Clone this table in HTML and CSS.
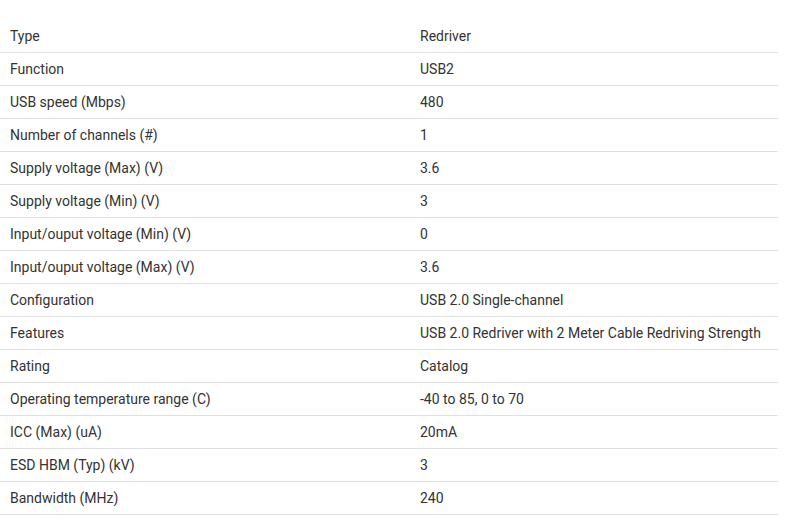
FILE: index.html
```html
<!DOCTYPE html>
<html>
<head>
<meta charset="utf-8">
<link rel="stylesheet" href="styles.css">
</head>
<body>
<table class="params">
<colgroup><col class="col-name"><col class="col-value"></colgroup>
<tbody>
<tr><td>Type</td><td>Redriver</td></tr>
<tr><td>Function</td><td>USB2</td></tr>
<tr><td>USB speed (Mbps)</td><td>480</td></tr>
<tr><td>Number of channels (#)</td><td>1</td></tr>
<tr><td>Supply voltage (Max) (V)</td><td>3.6</td></tr>
<tr><td>Supply voltage (Min) (V)</td><td>3</td></tr>
<tr><td>Input/ouput voltage (Min) (V)</td><td>0</td></tr>
<tr><td>Input/ouput voltage (Max) (V)</td><td>3.6</td></tr>
<tr><td>Configuration</td><td>USB 2.0 Single-channel</td></tr>
<tr><td>Features</td><td>USB 2.0 Redriver with 2 Meter Cable Redriving Strength</td></tr>
<tr><td>Rating</td><td>Catalog</td></tr>
<tr><td>Operating temperature range (C)</td><td>-40 to 85, 0 to 70</td></tr>
<tr><td>ICC (Max) (uA)</td><td>20mA</td></tr>
<tr><td>ESD HBM (Typ) (kV)</td><td>3</td></tr>
<tr><td>Bandwidth (MHz)</td><td>240</td></tr>
</tbody>
</table>
</body>
</html>
```
FILE: styles.css
```css
html, body {
  margin: 0;
  padding: 0;
  background: #fff;
}
body {
  padding-top: 20px;
  font-family: Roboto, "Liberation Sans", sans-serif;
  font-size: 14px;
  color: #333;
}
.params {
  width: 778px;
  border-collapse: collapse;
  table-layout: fixed;
}
.col-name {
  width: 410px;
}
.col-value {
  width: 368px;
}
.params td {
  height: 32px;
  padding: 0 10px;
  border-bottom: 1px solid #e0e0e0;
  vertical-align: middle;
  white-space: nowrap;
}
```
